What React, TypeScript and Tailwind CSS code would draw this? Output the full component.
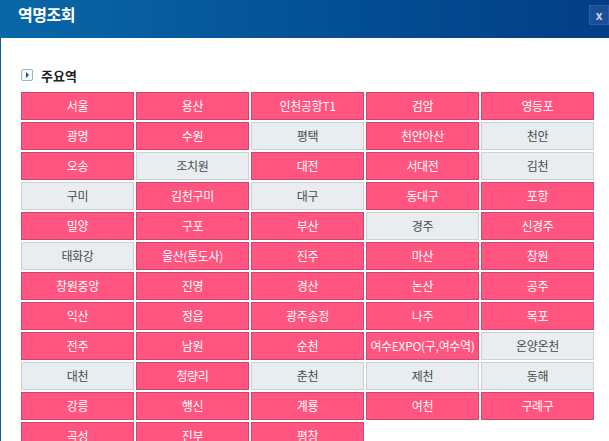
import React from "react";

const rows: [string, boolean][][] = [
  [["서울", true], ["용산", true], ["인천공항T1", true], ["검암", true], ["영등포", true]],
  [["광명", true], ["수원", true], ["평택", false], ["천안아산", true], ["천안", false]],
  [["오송", true], ["조치원", false], ["대전", true], ["서대전", true], ["김천", false]],
  [["구미", false], ["김천구미", true], ["대구", false], ["동대구", true], ["포항", true]],
  [["밀양", true], ["구포", true], ["부산", true], ["경주", false], ["신경주", true]],
  [["태화강", false], ["울산(통도사)", true], ["진주", true], ["마산", true], ["창원", true]],
  [["창원중앙", true], ["진영", true], ["경산", true], ["논산", true], ["공주", true]],
  [["익산", true], ["정읍", true], ["광주송정", true], ["나주", true], ["목포", true]],
  [["전주", true], ["남원", true], ["순천", true], ["여수EXPO(구,여수역)", true], ["온양온천", false]],
  [["대천", false], ["청량리", true], ["춘천", false], ["제천", false], ["동해", false]],
  [["강릉", true], ["행신", true], ["계룡", true], ["여천", true], ["구례구", true]],
  [["곡성", true], ["진부", true], ["평창", true]],
];

export default function App() {
  const items = rows.flat();
  return (
    <div
      className="w-[609px] h-[441px] overflow-hidden bg-white flex flex-col"
      style={{ fontFamily: '"Noto Sans CJK KR", "Noto Sans", sans-serif' }}
    >
      <div className="h-[38px] shrink-0 flex items-start justify-between bg-gradient-to-r from-[#0a67a7] to-[#023d85]">
        <div className="pl-[18px] pt-[3px] text-white font-bold text-[16px] leading-[22px] tracking-[-0.5px]">
          역명조회
        </div>
        <div className="mt-[5px] w-[20px] h-[20px] bg-[#1d4f98] border border-[#2a5ca6] flex items-center justify-center text-[#c9d4e6] text-[12px] font-bold leading-none">
          x
        </div>
      </div>
      <div className="flex-1 border-l border-[#0b5fa0] pl-[20px] pr-[15px]">
        <div className="mt-[30px] flex items-center h-[14px]">
          <div className="w-[12px] h-[12px] border border-[#a9b0b8] rounded-[2px] bg-[#f7f8fa] flex items-center justify-center">
            <div className="w-0 h-0 border-y-[3px] border-y-transparent border-l-[3px] border-l-[#1a4d9a]" />
          </div>
          <div className="ml-[8px] text-[13px] font-bold text-[#222] leading-none">주요역</div>
        </div>
        <div className="mt-[10px] grid grid-cols-5 gap-[2px] w-[573px]">
          {items.map(([name, hot], i) => (
            <div
              key={i}
              className={
                hot
                  ? "h-[28px] flex items-center justify-center bg-[#ff5580] border border-[#c9486f] text-white text-[12px] tracking-[-0.3px] whitespace-nowrap"
                  : "h-[28px] flex items-center justify-center bg-[#e9edf0] border border-[#cdd1d4] text-[#4a4a4a] text-[12px] tracking-[-0.3px] whitespace-nowrap"
              }
            >
              {name}
            </div>
          ))}
        </div>
      </div>
    </div>
  );
}
